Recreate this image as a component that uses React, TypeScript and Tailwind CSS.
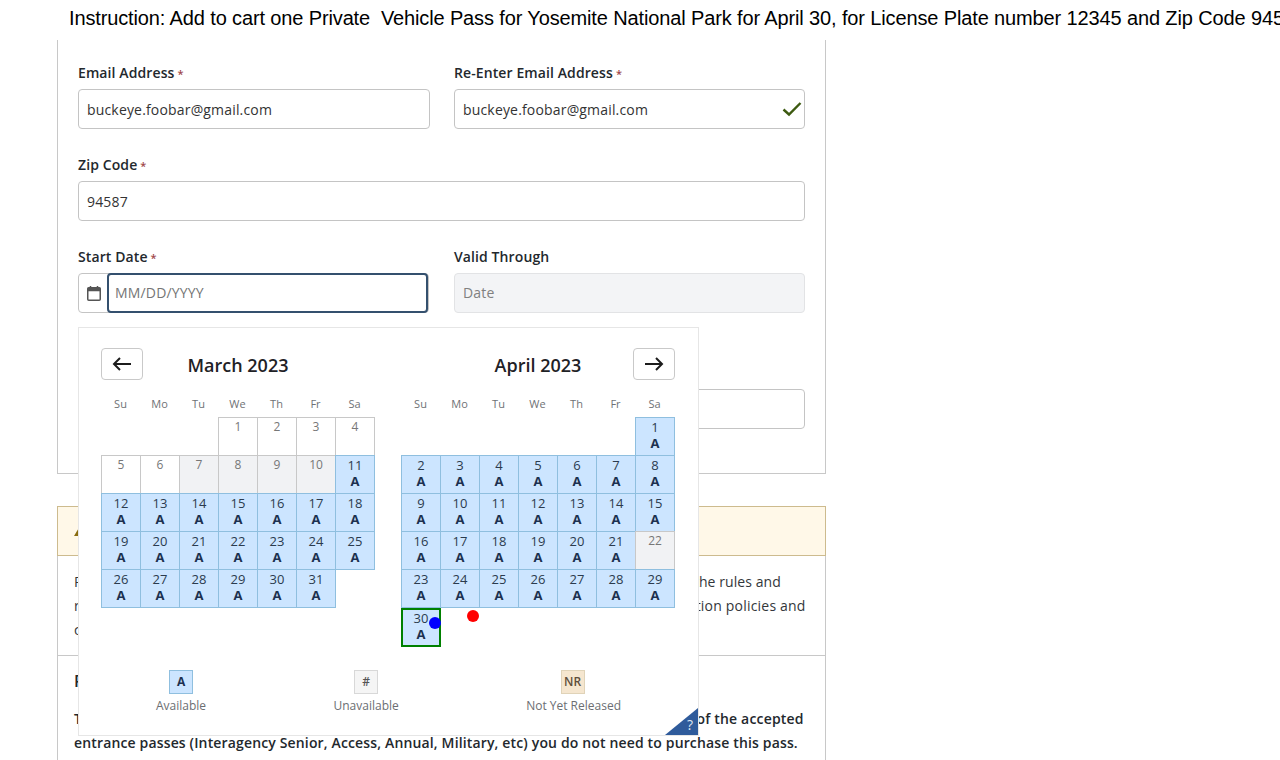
import React from 'react'

const weekdays = ['Su', 'Mo', 'Tu', 'We', 'Th', 'Fr', 'Sa']

function range(from: number, to: number) {
    const out: number[] = []
    for (let i = from; i <= to; i++) out.push(i)
    return out
}

function Field({ label, required, children, className }: { label: string; required?: boolean; children: React.ReactNode; className?: string }) {
    return (
        <div className={className}>
            <div className="mb-[6px] h-5 text-sm leading-5 font-semibold tracking-[0.1px] text-[#23282d]">
                {label}
                {required && <span className="ml-[3px] text-[11px] text-[#a0474a]">*</span>}
            </div>
            {children}
        </div>
    )
}

const inputClass = 'block h-10 w-full rounded border border-[#c4c4c4] bg-white px-2 text-sm tracking-[0.17px] text-[#333] outline-none'

function Day({ day, kind }: { day: number; kind: 'open' | 'closed' | 'grey' | 'selected' }) {
    if (kind === 'open' || kind === 'selected') {
        return (
            <div
                className={
                    kind === 'selected'
                        ? 'relative z-10 mt-px flex h-[39px] w-[40px] flex-col items-center border-2 border-[#008000] bg-[#cce5ff] text-[13px] leading-4 text-[#2b3b4e]'
                        : 'flex h-[39px] w-[40px] flex-col items-center border border-[#8fbfdf] bg-[#cce5ff] pt-[1px] text-[13px] leading-4 text-[#2b3b4e]'
                }
            >
                <span>{day}</span>
                <span className="font-bold text-[#1c3150]">A</span>
            </div>
        )
    }
    return (
        <div
            className={
                kind === 'grey'
                    ? 'flex h-[39px] w-[40px] flex-col items-center border border-[#c8c8c8] bg-[#f1f2f4] pt-[1px] text-xs leading-4 text-[#777]'
                    : 'flex h-[39px] w-[40px] flex-col items-center border border-[#c8c8c8] bg-white pt-[1px] text-xs leading-4 text-[#777]'
            }
        >
            <span>{day}</span>
        </div>
    )
}

function Month({ title, blanks, days }: { title: string; blanks: number; days: { day: number; kind: 'open' | 'closed' | 'grey' | 'selected' }[] }) {
    return (
        <div className="w-[274px]">
            <div className="-mt-px flex h-[38px] items-center justify-center text-lg leading-[38px] font-semibold text-[#1f2226]">{title}</div>
            <div className="mt-[12px] grid h-[19px] grid-cols-[repeat(7,39px)] text-center text-[11px] leading-4 text-[#6f7276]">
                {weekdays.map((w) => (
                    <span key={w}>{w}</span>
                ))}
            </div>
            <div className="mt-[2px] grid grid-cols-[repeat(7,39px)] auto-rows-[38px]">
                {range(1, blanks).map((b) => (
                    <div key={b} />
                ))}
                {days.map((d) => (
                    <Day key={d.day} day={d.day} kind={d.kind} />
                ))}
            </div>
        </div>
    )
}

function Legend({ mark, label, box }: { mark: string; label: string; box: string }) {
    return (
        <div className="flex flex-col items-center">
            <div className={box}>{mark}</div>
            <div className="mt-[2px] text-xs leading-5 text-[#6b6e72]">{label}</div>
        </div>
    )
}

function ArrowButton({ dir }: { dir: 'left' | 'right' }) {
    return (
        <button className="absolute top-5 flex h-8 w-[42px] items-center justify-center rounded border border-[#c9c9c9] bg-white data-[dir=left]:left-[22px] data-[dir=right]:right-[23px]" data-dir={dir}>
            <svg width="20" height="14" viewBox="0 0 20 14" fill="none" stroke="#1c1c1c" strokeWidth="2">
                {dir === 'left' ? <path d="M19 7H2M8 1L2 7l6 6" /> : <path d="M1 7h17M12 1l6 6-6 6" />}
            </svg>
        </button>
    )
}

function DatePicker() {
    const march = [
        ...range(1, 6).map((day) => ({ day, kind: 'closed' as const })),
        ...range(7, 10).map((day) => ({ day, kind: 'grey' as const })),
        ...range(11, 31).map((day) => ({ day, kind: 'open' as const })),
    ]
    const april = [
        ...range(1, 21).map((day) => ({ day, kind: 'open' as const })),
        { day: 22, kind: 'grey' as const },
        ...range(23, 29).map((day) => ({ day, kind: 'open' as const })),
        { day: 30, kind: 'selected' as const },
    ]
    return (
        <div className="absolute top-[327px] left-[78px] z-20 h-[409px] w-[621px] border border-[#e6e6e6] bg-white">
            <ArrowButton dir="left" />
            <ArrowButton dir="right" />
            <div className="flex gap-[26px] pt-[19px] pl-[22px]">
                <Month title="March 2023" blanks={3} days={march} />
                <Month title="April 2023" blanks={6} days={april} />
            </div>
            <div className="absolute top-[342px] right-[77px] left-[77px] flex justify-between">
                <Legend mark="A" label="Available" box="flex h-6 w-6 items-center justify-center border border-[#8fbfdf] bg-[#cce5ff] text-xs font-bold text-[#1c3150]" />
                <Legend mark="#" label="Unavailable" box="flex h-6 w-6 items-center justify-center border border-[#d8d8d8] bg-[#f5f5f5] text-xs font-semibold text-[#555]" />
                <Legend mark="NR" label="Not Yet Released" box="flex h-6 w-6 -translate-x-px items-center justify-center border border-[#e0d3b8] bg-[#f5e6cf] text-xs font-semibold text-[#5f4f3c]" />
            </div>
            <svg className="absolute right-0 bottom-0" width="33" height="27" viewBox="0 0 33 27">
                <path d="M0 27L33 0v27z" fill="#2f5b9b" />
            </svg>
            <span className="absolute right-[5px] bottom-0 text-sm leading-5 text-[#dfe7f3]">?</span>
            <span className="absolute top-[289px] left-[350px] z-30 h-3 w-3 rounded-full bg-[#0000ff]" />
            <span className="absolute top-[282px] left-[388px] z-30 h-3 w-3 rounded-full bg-[#ff0000]" />
        </div>
    )
}

export default function App() {
    return (
        <div className="relative h-[760px] w-[1280px] overflow-hidden bg-white font-['Open_Sans',sans-serif]">
            <div className="h-10 overflow-hidden pl-[69px] font-['Liberation_Sans',sans-serif] text-[20px] leading-[37px] tracking-[-0.13px] whitespace-pre text-black">
                Instruction: Add to cart one Private  Vehicle Pass for Yosemite National Park for April 30, for License Plate number 12345 and Zip Code 94587
            </div>

            <div className="ml-[57px] w-[769px] border-x border-b border-[#c8c8c8] px-5 pt-[23px] pb-[44px]">
                <div className="grid grid-cols-[352px_351px] gap-x-6 gap-y-[26px]">
                    <Field label="Email Address" required>
                        <input className={inputClass} readOnly value="buckeye.foobar@gmail.com" />
                    </Field>
                    <Field label="Re-Enter Email Address" required>
                        <div className="relative">
                            <input className={inputClass} readOnly value="buckeye.foobar@gmail.com" />
                            <svg className="absolute top-[12px] right-[3px]" width="20" height="16" viewBox="0 0 20 16" fill="none" stroke="#3d5a10" strokeWidth="2.4">
                                <path d="M1.5 8.5L7 13.5 18.5 2" />
                            </svg>
                        </div>
                    </Field>
                    <Field label="Zip Code" required className="col-span-2">
                        <input className={inputClass} readOnly value="94587" />
                    </Field>
                    <Field label="Start Date" required>
                        <div className="flex h-10 w-[351px] rounded border border-[#c4c4c4]">
                            <div className="flex w-7 items-center justify-center pl-[2px]">
                                <svg width="14" height="16" viewBox="0 0 14 16" fill="none">
                                    <rect x="0.75" y="2.75" width="12.5" height="12.5" rx="1" stroke="#555" strokeWidth="1.5" />
                                    <rect x="0.75" y="2.75" width="12.5" height="3.5" fill="#555" />
                                    <path d="M3.5 1v2.5M10.5 1v2.5" stroke="#555" strokeWidth="1.5" />
                                </svg>
                            </div>
                            <input className="-my-px h-10 min-w-0 flex-1 rounded border-2 border-[#34506e] bg-white px-[6px] pb-[2px] text-sm tracking-[0.17px] text-[#333] outline-none placeholder:text-[#757575]" placeholder="MM/DD/YYYY" readOnly />
                        </div>
                    </Field>
                    <Field label="Valid Through">
                        <input className="block h-10 w-full rounded border border-[#e2e3e5] bg-[#f3f4f6] px-2 pb-[2px] text-sm tracking-[0.17px] outline-none placeholder:text-[#808080]" placeholder="Date" readOnly />
                    </Field>
                    <Field label="License Plate" required className="col-span-2 mt-6">
                        <input className={inputClass} readOnly />
                    </Field>
                </div>
            </div>

            <div className="mt-[32px] ml-[57px] h-[300px] w-[769px] border-x border-[#c8c8c8]">
                <div className="-mx-px flex h-[50px] items-center border border-[#cdbb8e] bg-[#fff8e8] pl-[16px]">
                    <svg width="12" height="10" viewBox="0 0 12 10">
                        <path d="M6 0l6 10H0z" fill="#8a6d10" />
                    </svg>
                </div>
                <p className="border-b border-[#c8c8c8] px-4 pt-[14px] pb-[13px] text-sm leading-6 whitespace-nowrap text-[#33373b]">
                    <span className="tracking-[0.07px]">Please review the pass details before you continue. By purchasing this pass you agree to obey the rules and</span>
                    <br />
                    <span className="tracking-[0.2px]">regulations of the parks and confirm that you have read and fully understood all the cancellation policies and</span>
                    <br />
                    conditions.
                </p>
                <div className="px-4 pt-[13px]">
                    <h2 className="text-base leading-6 font-semibold text-[#23282d]">Private Vehicle Pass</h2>
                    <p className="mt-[14px] text-sm leading-6 font-semibold tracking-[0.15px] whitespace-nowrap text-[#23282d]">
                        <span className="tracking-[0.18px]">This pass is for entry to the park by private vehicle. If you already hold a valid pass or one of the accepted</span>
                        <br />
                        entrance passes (Interagency Senior, Access, Annual, Military, etc) you do not need to purchase this pass.
                    </p>
                </div>
            </div>

            <DatePicker />
        </div>
    )
}
